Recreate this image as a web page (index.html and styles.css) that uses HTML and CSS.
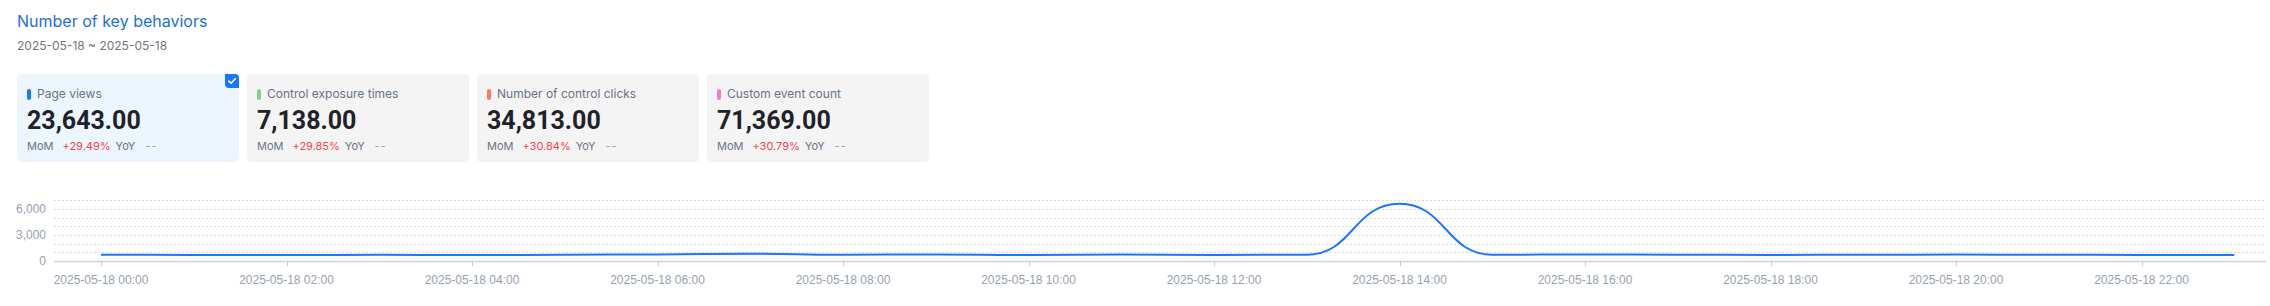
FILE: index.html
```html
<!DOCTYPE html>
<html lang="en">
<head>
  <meta charset="UTF-8"/>
  <title>Number of key behaviors</title>
  <link rel="stylesheet" href="styles.css">
</head>
<body>
  <div class="panel">
    <h2 class="title">Number of key behaviors</h2>
    <div class="range">2025-05-18 ~ 2025-05-18</div>

    <!-- metric cards -->
    <div class="cards">
      <div class="card selected">
        <span class="check">
          <svg width="10" height="10" viewBox="0 0 10 10"><path d="M1.8 5.2 L4 7.2 L8.3 2.8" fill="none" stroke="#fff" stroke-width="1.6" stroke-linecap="round" stroke-linejoin="round"/></svg>
        </span>
        <div class="label"><i class="bar blue"></i>Page views</div>
        <div class="value">23,643.00</div>
        <div class="compare"><span>MoM</span><span class="up">+29.49%</span><span class="yoy">YoY</span><span class="none">--</span></div>
      </div>
      <div class="card">
        <div class="label"><i class="bar green"></i>Control exposure times</div>
        <div class="value">7,138.00</div>
        <div class="compare"><span>MoM</span><span class="up">+29.85%</span><span class="yoy">YoY</span><span class="none">--</span></div>
      </div>
      <div class="card">
        <div class="label"><i class="bar orange"></i>Number of control clicks</div>
        <div class="value">34,813.00</div>
        <div class="compare"><span>MoM</span><span class="up">+30.84%</span><span class="yoy">YoY</span><span class="none">--</span></div>
      </div>
      <div class="card">
        <div class="label"><i class="bar pink"></i>Custom event count</div>
        <div class="value">71,369.00</div>
        <div class="compare"><span>MoM</span><span class="up">+30.79%</span><span class="yoy">YoY</span><span class="none">--</span></div>
      </div>
    </div>

    <!-- trend chart -->
    <div class="chart">
      <svg id="trend" width="2270" height="110" viewBox="0 190 2270 110"></svg>
    </div>
  </div>

  <script>
    (function () {
      const svg = document.getElementById('trend');
      const NS = 'http://www.w3.org/2000/svg';
      const values = [730, 700, 690, 710, 680, 720, 760, 840, 720, 760, 680, 740,
                      700, 720, 6600, 720, 760, 730, 700, 720, 740, 720, 700, 680];
      const left = 54, right = 2266, axisY = 261, top = 200.3, max = 7000;
      const x0 = 101, step = 92.75;
      const px = i => x0 + i * step;
      const py = v => axisY - v * (axisY - top) / max;

      function el(name, attrs, text) {
        const n = document.createElementNS(NS, name);
        for (const k in attrs) n.setAttribute(k, attrs[k]);
        if (text) n.textContent = text;
        svg.appendChild(n);
        return n;
      }

      // dotted grid, one line per 1000
      for (let v = 1000; v <= max; v += 1000) {
        const y = Math.round(py(v)) + 0.5;
        el('line', { x1: left, x2: right, y1: y, y2: y, class: 'grid' });
      }
      el('line', { x1: left, x2: right, y1: axisY + 0.5, y2: axisY + 0.5, class: 'axis' });

      // y labels
      [0, 3000, 6000].forEach(v => {
        el('text', { x: 46, y: py(v) + 4, class: 'ylabel' }, v.toLocaleString('en-US'));
      });

      // x ticks + labels every 2 hours
      for (let h = 0; h < 24; h += 2) {
        const x = Math.round(px(h)) + 0.5;
        el('line', { x1: x, x2: x, y1: axisY + 1, y2: axisY + 5, class: 'tick' });
        el('text', { x: px(h), y: 284, class: 'xlabel' }, '2025-05-18 ' + String(h).padStart(2, '0') + ':00');
      }

      // smoothed line
      let d = 'M' + px(0) + ' ' + py(values[0]);
      for (let i = 1; i < values.length; i++) {
        const xa = px(i - 1), xb = px(i), ya = py(values[i - 1]), yb = py(values[i]);
        const c = (xb - xa) / 2;
        d += ' C' + (xa + c) + ' ' + ya + ' ' + (xb - c) + ' ' + yb + ' ' + xb + ' ' + yb;
      }
      el('path', { d: d, class: 'line' });
    })();
  </script>
</body>
</html>
```

FILE: styles.css
```css
* {
  box-sizing: border-box;
}
html, body {
  margin: 0;
  padding: 0;
  background: #fff;
  font-family: Inter, "Noto Sans", sans-serif;
}
.panel {
  padding: 9px 17px 0;
}
.title {
  margin: 0;
  font-size: 16px;
  line-height: 24px;
  font-weight: 400;
  color: #1d6fd8;
}
.range {
  margin-top: 5px;
  font-size: 12px;
  line-height: 16px;
  color: #6f7684;
}
.cards {
  display: flex;
  gap: 8px;
  margin-top: 20px;
}
.card {
  position: relative;
  width: 222px;
  height: 88px;
  padding: 12px 10px 0;
  background: #f4f4f5;
  border-radius: 4px;
}
.card.selected {
  background: #edf5fe;
}
.check {
  position: absolute;
  top: 0;
  right: 0;
  width: 14px;
  height: 14px;
  background: #1677ff;
  border-radius: 0 4px 0 4px;
  display: flex;
  align-items: center;
  justify-content: center;
}
.check svg {
  display: block;
}
.label {
  display: flex;
  align-items: center;
  gap: 6px;
  font-size: 12px;
  line-height: 16px;
  color: #6b7385;
}
.bar {
  width: 4px;
  height: 11px;
  border-radius: 2px;
}
.bar.blue { background: #1677ff; }
.bar.green { background: #7dd680; }
.bar.orange { background: #ff7a52; }
.bar.pink { background: #f27dc2; }
.value {
  margin-top: 4px;
  font-family: Roboto, "Liberation Sans", sans-serif;
  font-weight: 700;
  font-size: 25px;
  line-height: 30px;
  color: #1f2329;
}
.compare {
  display: flex;
  margin-top: 2px;
  font-size: 11px;
  line-height: 16px;
  color: #6b7385;
}
.compare .up {
  margin-left: 9px;
  color: #f5454a;
}
.compare .yoy {
  margin-left: 5px;
}
.compare .none {
  margin-left: 10px;
  letter-spacing: 1px;
  color: #9ca3af;
}
.chart {
  margin: 28px -17px 0;
}
.chart svg {
  display: block;
}
.grid {
  stroke: #dcdcdc;
  stroke-width: 1;
  stroke-dasharray: 2 2;
}
.axis {
  stroke: #d4d4d4;
  stroke-width: 1.5;
}
.tick {
  stroke: #c8c8c8;
  stroke-width: 1;
}
.ylabel, .xlabel {
  font-family: "Liberation Sans", Arial, sans-serif;
  font-size: 12px;
  fill: #98a1b2;
}
.ylabel {
  text-anchor: end;
}
.xlabel {
  text-anchor: middle;
}
.line {
  fill: none;
  stroke: #1677ff;
  stroke-width: 2;
}
```
